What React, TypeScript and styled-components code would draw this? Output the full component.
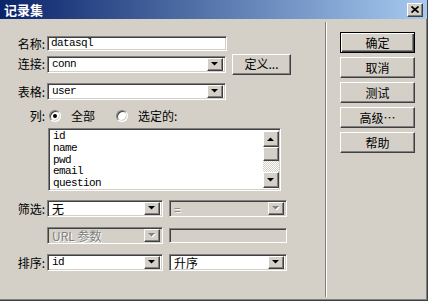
import React from "react";
import styled, { createGlobalStyle, css } from "styled-components";

const GlobalStyle = createGlobalStyle`
  * { box-sizing: border-box; }
  html, body { margin: 0; padding: 0; background: #d4d0c8; }
  body {
    font-family: "Noto Sans CJK SC", "Liberation Sans", sans-serif;
    font-size: 12px;
    color: #000;
  }
`;

const raised = css`
  border: 1px solid;
  border-color: #ffffff #404040 #404040 #ffffff;
  box-shadow: inset -1px -1px #808080, inset 1px 1px #d4d0c8;
  background: #d4d0c8;
`;

const sunken = css`
  border: 1px solid;
  border-color: #808080 #ffffff #ffffff #808080;
  box-shadow: inset 1px 1px #404040, inset -1px -1px #d4d0c8;
`;

const Window = styled.div`
  width: 428px;
  height: 301px;
  display: flex;
  flex-direction: column;
  background: #d4d0c8;
  border-right: 1px solid #404040;
  border-bottom: 1px solid #404040;
  box-shadow: inset -1px -1px #808080;
  overflow: hidden;
`;

const TitleBar = styled.div`
  height: 19px;
  flex-shrink: 0;
  display: flex;
  align-items: center;
  justify-content: space-between;
  padding: 0 4px 0 4px;
  background: linear-gradient(to right, #0a246a, #a6caf0);
`;

const Title = styled.span`
  color: #fff;
  font-weight: bold;
  font-size: 13px;
  line-height: 14px;
`;

const CloseButton = styled.div`
  ${raised};
  width: 16px;
  height: 14px;
  display: flex;
  align-items: center;
  justify-content: center;
`;

const Body = styled.div`
  flex: 1;
  display: flex;
  padding: 3px 0 3px 0;
`;

const LeftPanel = styled.div`
  width: 326px;
  padding-top: 14px;
  border-right: 1px solid #808080;
  display: flex;
  flex-direction: column;
`;

const RightPanel = styled.div`
  flex: 1;
  border-left: 1px solid #ffffff;
  padding: 10px 0 0 13px;
  display: flex;
  flex-direction: column;
  gap: 4px;
`;

const Row = styled.div<{ $mt: number; $h: number }>`
  margin-top: ${(p) => p.$mt}px;
  height: ${(p) => p.$h}px;
  display: flex;
  align-items: center;
  gap: 6px;
`;

const Label = styled.div`
  width: 47px;
  margin-right: -6px;
  text-align: right;
  padding-right: 2px;
  white-space: nowrap;
  line-height: 14px;
`;

const Spacer = styled.div`
  width: 47px;
  margin-right: -6px;
`;

const mono = css`
  font-family: "Liberation Mono", "DejaVu Sans Mono", monospace;
  font-size: 11px;
  letter-spacing: -0.6px;
`;

const TextField = styled.div<{ $w: number; $disabled?: boolean }>`
  ${sunken};
  ${mono};
  width: ${(p) => p.$w}px;
  height: 15px;
  background: ${(p) => (p.$disabled ? "#d4d0c8" : "#fff")};
  padding: 0 3px;
  line-height: 12px;
  white-space: nowrap;
`;

const SelectBox = styled.div<{ $w: number; $disabled?: boolean }>`
  ${sunken};
  width: ${(p) => p.$w}px;
  height: 17px;
  padding: 2px;
  display: flex;
  align-items: center;
  background: ${(p) => (p.$disabled ? "#d4d0c8" : "#fff")};
`;

const SelectValue = styled.div<{ $mono?: boolean; $disabled?: boolean }>`
  flex: 1;
  padding-left: 2px;
  line-height: 13px;
  white-space: nowrap;
  ${(p) => p.$mono && mono};
  color: ${(p) => (p.$disabled ? "#808080" : "#000")};
  text-shadow: ${(p) => (p.$disabled ? "1px 1px #fff" : "none")};
`;

const ArrowButton = styled.div`
  ${raised};
  width: 16px;
  height: 13px;
  display: flex;
  align-items: center;
  justify-content: center;
`;

const PushButton = styled.div<{ $default?: boolean; $w?: number }>`
  ${raised};
  width: ${(p) => p.$w ?? 75}px;
  height: 21px;
  display: flex;
  align-items: center;
  justify-content: center;
  line-height: 14px;
  ${(p) =>
    p.$default &&
    css`
      border-color: #000;
      box-shadow: inset 1px 1px #fff, inset -1px -1px #404040,
        inset -2px -2px #808080;
    `}
`;

const RadioGroup = styled.div`
  display: flex;
  align-items: center;
  margin-left: 2px;
`;

const RadioOption = styled.div`
  display: flex;
  align-items: center;
  gap: 10px;
  margin-right: 21px;
  line-height: 14px;
`;

const RadioCircle = styled.div<{ $checked?: boolean }>`
  width: 12px;
  height: 12px;
  border-radius: 50%;
  background: #fff;
  border: 1px solid;
  border-color: #808080 #ffffff #ffffff #808080;
  box-shadow: inset 1px 1px #404040, inset -1px -1px #d4d0c8;
  display: flex;
  align-items: center;
  justify-content: center;

  &::after {
    content: "";
    display: ${(p) => (p.$checked ? "block" : "none")};
    width: 4px;
    height: 4px;
    border-radius: 50%;
    background: #000;
  }
`;

const ListBox = styled.div`
  ${sunken};
  margin: 6px 0 0 48px;
  width: 233px;
  height: 63px;
  background: #fff;
  display: flex;
  padding: 2px 1px 2px 2px;
`;

const ListItems = styled.div`
  ${mono};
  flex: 1;
  padding: 0 0 0 2px;
  line-height: 11.8px;
`;

const ScrollBar = styled.div`
  width: 16px;
  display: flex;
  flex-direction: column;
`;

const ScrollButton = styled.div`
  ${raised};
  width: 16px;
  height: 16px;
  display: flex;
  align-items: center;
  justify-content: center;
`;

const ScrollThumb = styled.div`
  ${raised};
  width: 16px;
  height: 14px;
`;

const ScrollTrack = styled.div`
  flex: 1;
  background: repeating-conic-gradient(#d4d0c8 0 25%, #ffffff 0 50%) 0 0 / 2px 2px;
`;

function Triangle({ up, disabled }: { up?: boolean; disabled?: boolean }) {
  const pts = up ? "0,4 7,4 3.5,0.5" : "0,0 7,0 3.5,3.5";
  return (
    <svg width="8" height="5" viewBox="0 0 8 5" style={{ overflow: "visible" }}>
      {disabled && <polygon points={pts} fill="#fff" transform="translate(1,1)" />}
      <polygon points={pts} fill={disabled ? "#808080" : "#000"} />
    </svg>
  );
}

function Select(props: { w: number; value: string; mono?: boolean; disabled?: boolean }) {
  return (
    <SelectBox $w={props.w} $disabled={props.disabled}>
      <SelectValue $mono={props.mono} $disabled={props.disabled}>
        {props.value}
      </SelectValue>
      <ArrowButton>
        <Triangle disabled={props.disabled} />
      </ArrowButton>
    </SelectBox>
  );
}

const columns = ["id", "name", "pwd", "email", "question"];

export default function App() {
  return (
    <>
      <GlobalStyle />
      <Window>
        <TitleBar>
          <Title>记录集</Title>
          <CloseButton>
            <svg width="8" height="7" viewBox="0 0 8 7">
              <path d="M0.5 0.5 L7.5 6.5 M7.5 0.5 L0.5 6.5" stroke="#000" strokeWidth="1.7" />
            </svg>
          </CloseButton>
        </TitleBar>
        <Body>
          <LeftPanel>
            <Row $mt={0} $h={15}>
              <Label>名称:</Label>
              <TextField $w={180}>datasql</TextField>
            </Row>
            <Row $mt={3} $h={20}>
              <Label>连接:</Label>
              <Select w={179} value="conn" mono />
              <PushButton $w={59}>定义...</PushButton>
            </Row>
            <Row $mt={9} $h={17}>
              <Label>表格:</Label>
              <Select w={179} value="user" mono />
            </Row>
            <Row $mt={9} $h={13}>
              <Label>列:</Label>
              <RadioGroup>
                <RadioOption>
                  <RadioCircle $checked />
                  全部
                </RadioOption>
                <RadioOption>
                  <RadioCircle />
                  选定的:
                </RadioOption>
              </RadioGroup>
            </Row>
            <ListBox>
              <ListItems>
                {columns.map((c) => (
                  <div key={c}>{c}</div>
                ))}
              </ListItems>
              <ScrollBar>
                <ScrollButton>
                  <Triangle up />
                </ScrollButton>
                <ScrollThumb />
                <ScrollTrack />
                <ScrollButton>
                  <Triangle />
                </ScrollButton>
              </ScrollBar>
            </ListBox>
            <Row $mt={9} $h={17}>
              <Label>筛选:</Label>
              <Select w={116} value="无" />
              <Select w={118} value="=" disabled />
            </Row>
            <Row $mt={10} $h={17}>
              <Spacer />
              <Select w={116} value="URL 参数" disabled />
              <TextField $w={118} $disabled />
            </Row>
            <Row $mt={10} $h={17}>
              <Label>排序:</Label>
              <Select w={116} value="id" mono />
              <Select w={118} value="升序" />
            </Row>
          </LeftPanel>
          <RightPanel>
            <PushButton $default>确定</PushButton>
            <PushButton>取消</PushButton>
            <PushButton>测试</PushButton>
            <PushButton>高级…</PushButton>
            <PushButton>帮助</PushButton>
          </RightPanel>
        </Body>
      </Window>
    </>
  );
}
